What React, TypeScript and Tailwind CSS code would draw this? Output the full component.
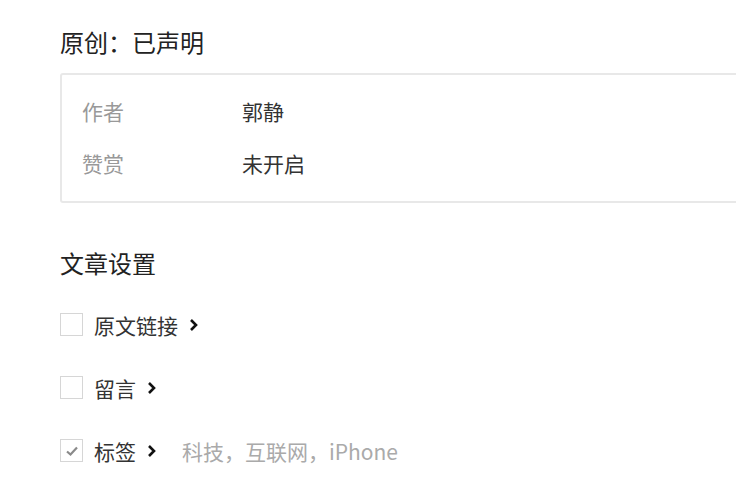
import React from 'react';

const font = { fontFamily: '"Noto Sans CJK SC", "Microsoft YaHei", sans-serif' };

const Chevron = () => (
  <svg width="9" height="14" viewBox="0 0 9 14" className="ml-[11px]">
    <path d="M2 2 L7 7 L2 12" fill="none" stroke="#111" strokeWidth="2.6" />
  </svg>
);

const Checkbox = ({ checked }: { checked?: boolean }) => (
  <div className="w-[23px] h-[23px] border border-[#d6d6d6] bg-white flex items-center justify-center">
    {checked && (
      <svg width="14" height="12" viewBox="0 0 14 12">
        <path d="M2 6.5 L5.5 9.5 L12 2.5" fill="none" stroke="#8a8a8a" strokeWidth="2.2" />
      </svg>
    )}
  </div>
);

export default function App() {
  const settings = [
    { label: '原文链接', checked: false },
    { label: '留言', checked: false },
    { label: '标签', checked: true, extra: '科技，互联网，iPhone' },
  ];

  return (
    <div className="w-[736px] h-[496px] bg-white overflow-hidden text-[#333]" style={font}>
      <div className="pl-[60px] pt-[25px]">
        <h2 className="text-[24px] leading-[34px] text-[#222]">原创：已声明</h2>
        <div className="mt-[14px] w-[700px] h-[130px] border-2 border-[#e8e8e8] rounded-[3px] px-[20px] pt-[21px] flex flex-col gap-[22px]">
          <div className="flex text-[21px] leading-[30px]">
            <span className="w-[160px] text-[#999]">作者</span>
            <span className="text-[#333]">郭静</span>
          </div>
          <div className="flex text-[21px] leading-[30px]">
            <span className="w-[160px] text-[#999]">赞赏</span>
            <span className="text-[#333]">未开启</span>
          </div>
        </div>

        <h2 className="mt-[43px] text-[24px] leading-[34px] text-[#222]">文章设置</h2>

        <div className="mt-[33px] flex flex-col gap-[40px]">
          {settings.map((s, i) => (
            <div key={i} className="flex items-center h-[23px]">
              <Checkbox checked={s.checked} />
              <span className="ml-[11px] text-[21px] leading-[30px] text-[#333]">{s.label}</span>
              <Chevron />
              {s.extra && (
                <span className="ml-[26px] text-[21px] leading-[30px] text-[#aaa]">{s.extra}</span>
              )}
            </div>
          ))}
        </div>
      </div>
    </div>
  );
}
